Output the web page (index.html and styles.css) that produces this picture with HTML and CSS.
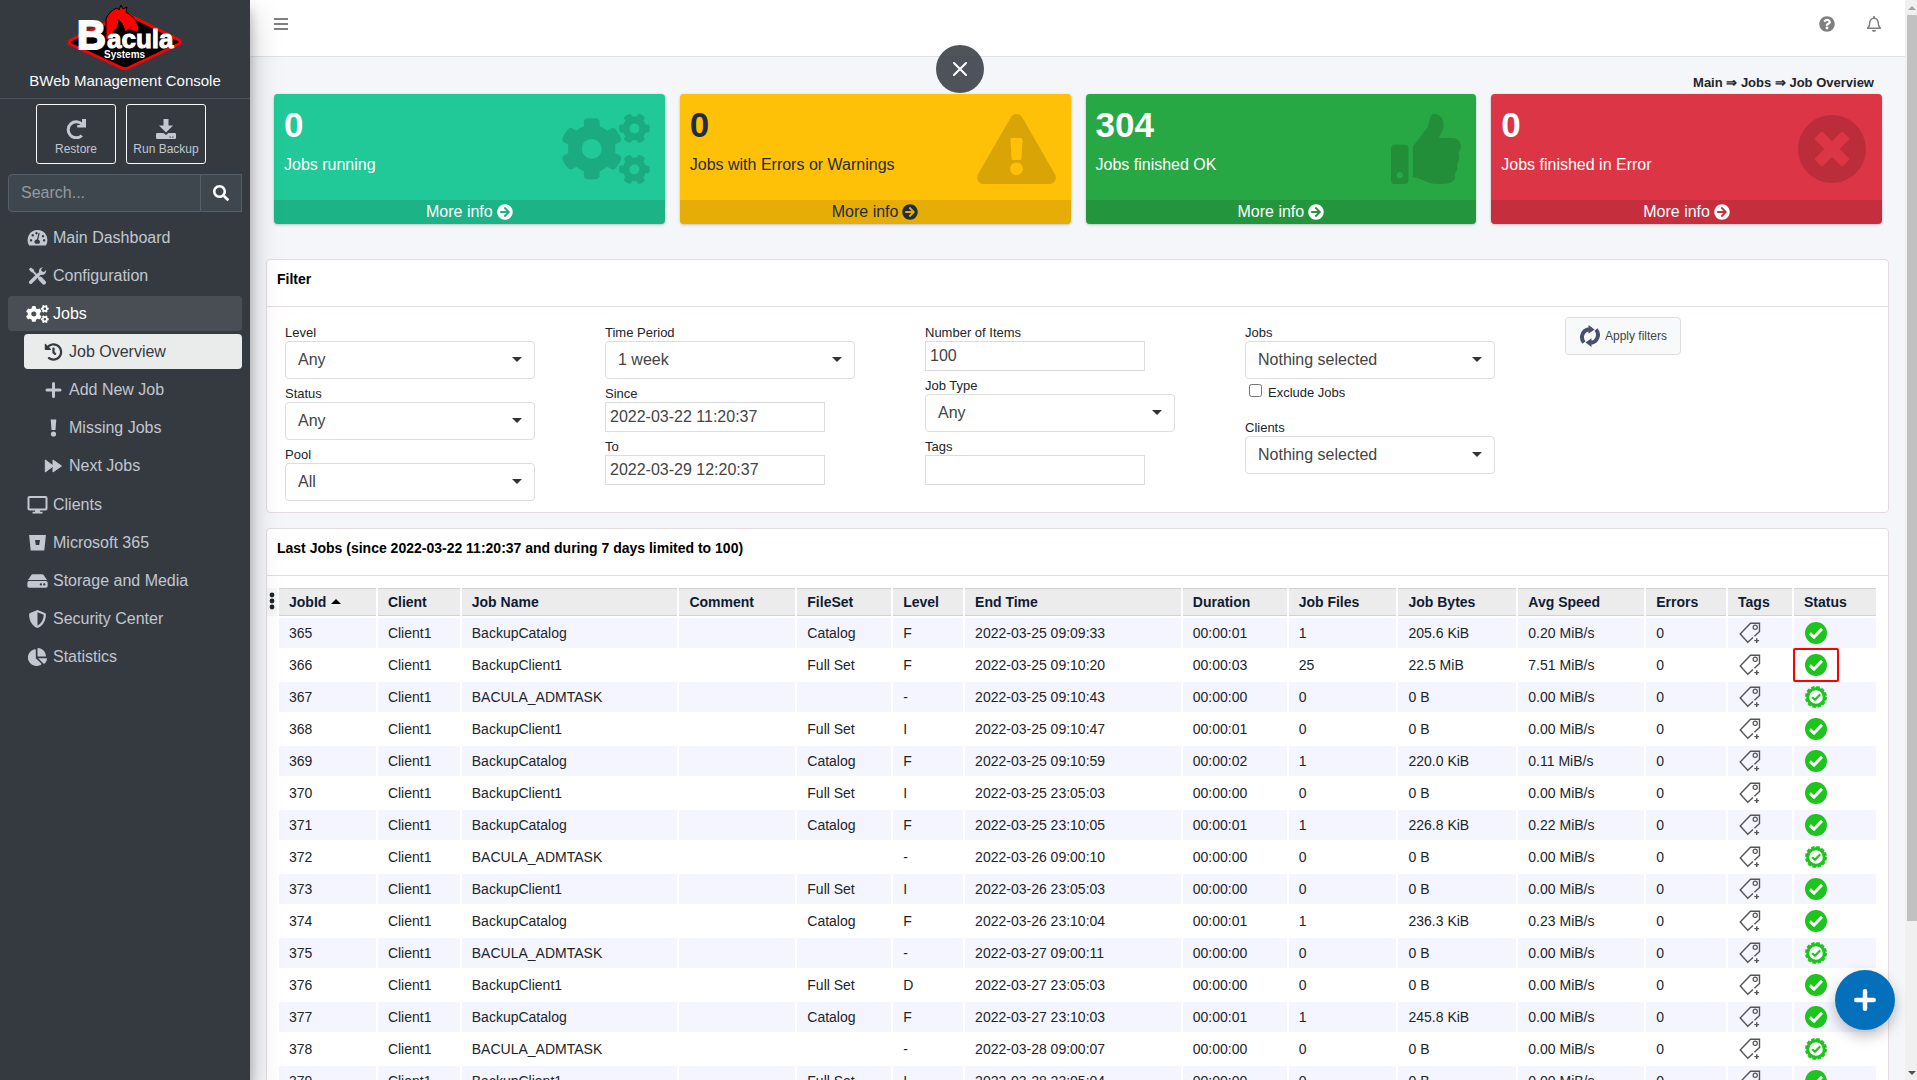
FILE: index.html
```html
<!DOCTYPE html>
<html lang="en">
<head>
<meta charset="utf-8">
<meta name="viewport" content="width=device-width, initial-scale=1">
<title>BWeb Management Console - Job Overview</title>
<link rel="stylesheet" href="styles.css">
</head>
<body>
<svg class="sprite" aria-hidden="true">
  <defs>
    <path id="small-cog" d="M512.1 191l-8.2 14.3c-3 5.3-9.4 7.5-15.1 5.4-11.8-4.4-22.6-10.7-32.1-18.6-4.6-3.8-5.8-10.5-2.8-15.7l8.2-14.3c-6.9-8-12.3-17.3-15.9-27.4h-16.5c-6 0-11.2-4.3-12.2-10.3-2-12-2.1-24.6 0-37.1 1-6 6.2-10.4 12.2-10.4h16.5c3.6-10.1 9-19.4 15.9-27.4l-8.2-14.3c-3-5.2-1.9-11.9 2.8-15.7 9.5-7.9 20.4-14.2 32.1-18.6 5.7-2.1 12.1.1 15.1 5.4l8.2 14.3c10.5-1.9 21.2-1.9 31.7 0L552 6.3c3-5.3 9.4-7.5 15.1-5.4 11.8 4.4 22.6 10.7 32.1 18.6 4.6 3.8 5.8 10.5 2.8 15.7l-8.2 14.3c6.9 8 12.3 17.3 15.9 27.4h16.5c6 0 11.2 4.3 12.2 10.3 2 12 2.1 24.6 0 37.1-1 6-6.2 10.4-12.2 10.4h-16.5c-3.6 10.1-9 19.4-15.9 27.4l8.2 14.3c3 5.2 1.9 11.9-2.8 15.7-9.5 7.9-20.4 14.2-32.1 18.6-5.7 2.1-12.1-.1-15.1-5.4l-8.2-14.3c-10.4 1.9-21.2 1.9-31.7 0zm-10.5-58.8c38.5 29.6 82.4-14.3 52.8-52.8-38.5-29.7-82.4 14.3-52.8 52.8z"/>
  </defs>
  <symbol id="i-cogs" viewBox="0 0 640 512">
    <use href="#small-cog"/>
    <use href="#small-cog" transform="translate(0 299)"/>
    <path d="M386.3 286.1l33.7 16.8c10.1 5.8 14.5 18.1 10.5 29.1-8.9 24.2-26.4 46.4-42.6 65.8-7.4 8.9-20.2 11.1-30.3 5.3l-29.1-16.8c-16 13.7-34.6 24.6-54.9 31.7v33.6c0 11.6-8.3 21.6-19.7 23.6-24.6 4.2-50.4 4.4-75.9 0-11.5-2-20-11.9-20-23.6V418c-20.3-7.2-38.9-18-54.9-31.7L74 403c-10 5.8-22.9 3.6-30.3-5.3-16.2-19.4-33.3-41.6-42.2-65.7-4-10.9.4-23.2 10.5-29.1l33.3-16.8c-3.9-20.9-3.9-42.4 0-63.4L12 205.8c-10.1-5.8-14.6-18.1-10.5-29 8.9-24.2 26-46.4 42.2-65.8 7.4-8.9 20.2-11.1 30.3-5.3l29.1 16.8c16-13.7 34.6-24.6 54.9-31.7V57.1c0-11.5 8.2-21.5 19.6-23.5 24.6-4.2 50.5-4.4 76-.1 11.5 2 20 11.9 20 23.6v33.6c20.3 7.2 38.9 18 54.9 31.7l29.1-16.8c10-5.8 22.9-3.6 30.3 5.3 16.2 19.4 33.2 41.6 42.1 65.8 4 10.9.1 23.2-10 29.1l-33.7 16.8c3.9 21 3.9 42.5 0 63.5zm-117.6 21.1c59.2-77-28.7-164.9-105.7-105.7-59.2 77 28.7 164.9 105.7 105.7z"/>
  </symbol>
  <symbol id="i-warning" viewBox="0 0 576 512"><path d="M569.517 440.013C587.975 472.007 564.806 512 527.94 512H48.054c-36.937 0-59.999-40.055-41.577-71.987L246.423 23.985c18.467-32.009 64.72-31.951 83.154 0l239.94 416.028zM288 354c-25.405 0-46 20.595-46 46s20.595 46 46 46 46-20.595 46-46-20.595-46-46-46zm-43.673-165.346l7.418 136c.347 6.364 5.609 11.346 11.982 11.346h48.546c6.373 0 11.635-4.982 11.982-11.346l7.418-136c.375-6.874-5.098-12.654-11.982-12.654h-63.383c-6.884 0-12.356 5.78-11.981 12.654z"/></symbol>
  <symbol id="i-thumb" viewBox="0 0 512 512"><path d="M104 224H24c-13.255 0-24 10.745-24 24v240c0 13.255 10.745 24 24 24h80c13.255 0 24-10.745 24-24V248c0-13.255-10.745-24-24-24zM64 472c-13.255 0-24-10.745-24-24s10.745-24 24-24 24 10.745 24 24-10.745 24-24 24zM384 81.452c0 42.416-25.97 66.208-33.277 94.548h101.723c33.397 0 59.397 27.746 59.553 58.098.084 17.938-7.546 37.249-19.439 49.197l-.11.11c9.836 23.337 8.237 56.037-9.308 79.469 8.681 25.895-.069 57.704-16.382 74.757 4.298 17.598 2.244 32.575-6.148 44.632C440.202 511.587 389.616 512 346.839 512l-2.845-.001c-48.287-.017-87.806-17.598-119.56-31.725-15.957-7.099-36.821-15.887-52.651-16.178-6.54-.12-11.783-5.457-11.783-11.998v-213.77c0-3.2 1.282-6.271 3.558-8.521 39.614-39.144 56.648-80.587 89.117-113.111 14.804-14.832 20.188-37.236 25.393-58.902C282.515 39.293 291.817 0 312 0c24 0 72 8 72 81.452z"/></symbol>
  <symbol id="i-times" viewBox="0 0 512 512"><path d="M256 8C119 8 8 119 8 256s111 248 248 248 248-111 248-248S393 8 256 8zm121.6 313.1c4.7 4.7 4.7 12.3 0 17L338 377.6c-4.7 4.7-12.3 4.7-17 0L256 312l-65.1 65.6c-4.7 4.7-12.3 4.7-17 0L134.4 338c-4.7-4.7-4.7-12.3 0-17l65.6-65-65.6-65.1c-4.7-4.7-4.7-12.3 0-17l39.6-39.6c4.7-4.7 12.3-4.7 17 0l65 65.7 65.1-65.6c4.7-4.7 12.3-4.7 17 0l39.6 39.6c4.7 4.7 4.7 12.3 0 17L312 256l65.6 65.1z"/></symbol>
  <symbol id="i-arrow" viewBox="0 0 512 512"><path d="M256 8c137 0 248 111 248 248S393 504 256 504 8 393 8 256 119 8 256 8zm-28.9 143.6l75.5 72.4H120c-13.3 0-24 10.7-24 24v16c0 13.3 10.7 24 24 24h182.6l-75.5 72.4c-9.7 9.3-9.9 24.8-.4 34.3l11 10.9c9.4 9.4 24.6 9.4 33.9 0L404.3 273c9.4-9.4 9.4-24.6 0-33.9L271.6 106.3c-9.4-9.4-24.6-9.4-33.9 0l-11 10.9c-9.5 9.6-9.3 25.1.4 34.4z"/></symbol>
  <symbol id="i-tag" viewBox="0 0 22 22"><path fill="none" stroke="#555" stroke-width="1.400" d="M15.500 14.300L20.500 9.500V1.200H11.500L1.200 12L8.800 20.300L14 15.600"/><circle cx="16.200" cy="5.200" r="2.100" fill="none" stroke="#555" stroke-width="1.200"/><path fill="none" stroke="#555" stroke-width="1.400" d="M17.700 16.200V21M15.300 18.600H20.100"/></symbol>
  <symbol id="i-ok" viewBox="0 0 22 22"><circle cx="11" cy="11" r="11" fill="#1ec41e"/><path fill="none" stroke="#fff" stroke-width="3" d="M4.800 11.300L9 15.200L17 6.800"/></symbol>
  <symbol id="i-admin" viewBox="0 0 22 22"><circle cx="11" cy="11" r="9.700" fill="#fff" stroke="#1ec41e" stroke-width="2.600" stroke-dasharray="3.400 1.679"/><circle cx="11" cy="11" r="8.300" fill="#fff" stroke="#1ec41e" stroke-width="3"/><path fill="none" stroke="#1ec41e" stroke-width="2" d="M7 11.200L10 13.800L15.200 8.200"/></symbol>
</svg>

<div class="app">
  <aside class="sidebar">
    <a class="brand" href="#">
      <svg class="brand-logo" viewBox="0 0 116 66" role="img" aria-label="Bacula Systems">
        <path fill="#000" stroke="#f00" stroke-width="3" stroke-linejoin="round" d="M3 35.500Q1.500 37 3 39L55 63Q58 64.500 61 63L112 39Q114.500 37 112 35L64 11L50 13Z"/>
        <path fill="#f00" stroke="#000" stroke-width="1" d="M39 14Q42 6 50 3L52 5L54 0L56 4L60 2L59 7L62 9Q68 13 70 18Q73 22 71 27L66 26L62 24L58 27Q56 18 51 14Q53 20 48 25Q44 29 43 36L39 34Z"/>
        <text class="logo-b" x="10" y="44">B</text>
        <text class="logo-acula" x="40" y="43">acula</text>
        <text class="logo-systems" x="37" y="53">Systems</text>
      </svg>
      <span class="brand-text">BWeb Management Console</span>
    </a>
    <div class="quick">
      <button type="button" class="quick-btn">
        <svg width="20" height="20" viewBox="0 0 20 20"><path fill="none" stroke="currentColor" stroke-width="3" d="M16.200 5.500A8 8 0 1 0 15.800 16.500"/><path fill="currentColor" d="M20 0V8.600H11.200V6H16V0Z"/></svg>
        <span>Restore</span>
      </button>
      <button type="button" class="quick-btn">
        <svg width="20" height="20" viewBox="0 0 20 20"><path fill="currentColor" fill-rule="evenodd" d="M7.500 0H12.500V6.500H17L10 13.500L3 6.500H7.500ZM1.200 14H7.500L10 16L12.500 14H18.800Q20 14 20 15.200V18.800Q20 20 18.800 20H1.200Q0 20 0 18.800V15.200Q0 14 1.200 14ZM13.500 17.600V18.800H14.700V17.600ZM16.200 17.600V18.800H17.400V17.600Z"/></svg>
        <span>Run Backup</span>
      </button>
    </div>
    <form class="search">
      <input type="text" placeholder="Search..." aria-label="Search">
      <button type="button" aria-label="Search"><svg width="16" height="16" viewBox="0 0 512 512"><path fill="currentColor" d="M505 442.700L405.300 343c-4.500-4.500-10.600-7-17-7H372c27.600-35.300 44-79.700 44-128C416 93.100 322.900 0 208 0S0 93.100 0 208s93.100 208 208 208c48.300 0 92.700-16.400 128-44v16.300c0 6.400 2.500 12.500 7 17l99.700 99.700c9.400 9.400 24.600 9.400 33.900 0l28.300-28.300c9.400-9.400 9.400-24.600.1-34zM208 336c-70.700 0-128-57.200-128-128 0-70.700 57.200-128 128-128 70.700 0 128 57.200 128 128 0 70.700-57.200 128-128 128z"/></svg></button>
    </form>
    <nav class="menu">
      <a href="#"><svg width="20" height="18" viewBox="0 0 20 18"><path fill="currentColor" fill-rule="evenodd" d="M10 1A10 10 0 0 0 1.400 16Q1.700 16.500 2.300 16.500H17.700Q18.300 16.500 18.600 16A10 10 0 0 0 10 1ZM3.500 10.100a1.200 1.200 0 1 0 .01 0ZM5.200 5.100a1.200 1.200 0 1 0 .01 0ZM9 3a1.200 1.200 0 1 0 .01 0ZM16.600 10.100a1.200 1.200 0 1 0 .01 0ZM15.500 6a1.200 1.200 0 1 0 .01 0ZM12.200 4L10.700 10.700A2.300 2.300 0 0 1 11.600 14.700H8A2.300 2.300 0 0 1 9.500 10.500L11 4Z"/></svg>Main Dashboard</a>
      <a href="#"><svg width="20" height="18" viewBox="0 0 20 18"><g fill="none" stroke="currentColor" stroke-linecap="round"><path stroke-width="4.200" d="M12.800 11.800L16.400 15.400"/><path stroke-width="1.800" d="M4 3L12 11"/><path stroke-width="3.600" d="M3.200 15.200L8.800 9.800"/><path stroke-width="3" d="M9.500 9L13.500 5.500"/></g><path fill="currentColor" d="M1.300 2.200L3.200.400L6.500 2.800V5.200H4ZM11.500 5Q11 1 15.400.2L13.500 2.500L14.200 4.500L16.500 5L18.700 3Q18.900 8 13.500 8Z"/></svg>Configuration</a>
      <a href="#" class="open"><svg width="22" height="18" fill="currentColor"><use href="#i-cogs"/></svg>Jobs</a>
      <div class="submenu">
        <a href="#" class="current"><svg width="18" height="18" viewBox="0 0 512 512"><path fill="currentColor" d="M504 255.531c.253 136.640-111.180 248.372-247.820 248.468-59.015.042-113.223-20.530-155.822-54.911-11.077-8.940-11.905-25.541-1.839-35.607l11.267-11.267c8.609-8.609 22.353-9.551 31.891-1.984C173.062 425.135 212.781 440 256 440c101.705 0 184-82.311 184-184 0-101.705-82.311-184-184-184-48.814 0-93.149 18.969-126.068 49.932l50.754 50.754c10.080 10.080 2.941 27.314-11.313 27.314H24c-8.837 0-16-7.163-16-16V38.627c0-14.254 17.234-21.393 27.314-11.314l49.372 49.372C129.209 34.136 189.552 8 256 8c136.810 0 247.747 110.780 248 247.531zm-180.912 78.784l9.823-12.630c8.138-10.463 6.253-25.542-4.210-33.679L288 256.349V152c0-13.255-10.745-24-24-24h-16c-13.255 0-24 10.745-24 24v135.651l65.409 50.874c10.463 8.137 25.541 6.253 33.679-4.210z"/></svg>Job Overview</a>
        <a href="#"><svg width="18" height="18" viewBox="0 0 18 18"><path fill="none" stroke="currentColor" stroke-width="3" stroke-linecap="round" d="M9 2.500V15.500M2.500 9H15.500"/></svg>Add New Job</a>
        <a href="#"><svg width="18" height="18" viewBox="0 0 18 18"><path fill="currentColor" d="M6.200 .5H11.800L11 11H7Z"/><circle cx="9" cy="15" r="2.600" fill="currentColor"/></svg>Missing Jobs</a>
        <a href="#"><svg width="18" height="18" viewBox="0 0 18 18"><path fill="currentColor" stroke="currentColor" stroke-linejoin="round" d="M.8 3V15L8.500 9.200V15L17 9L8.500 3V8.800Z"/></svg>Next Jobs</a>
      </div>
      <a href="#"><svg width="20" height="18" viewBox="0 0 20 18"><rect x="1" y="1" width="18" height="12.500" rx="1" fill="none" stroke="currentColor" stroke-width="2"/><path fill="currentColor" d="M8 13H12L12.600 15.800H15V17.500H5V15.800H7.400Z"/></svg>Clients</a>
      <a href="#"><svg width="20" height="18" viewBox="0 0 20 18"><path fill="currentColor" fill-rule="evenodd" d="M1.600 1H18.400L16.800 16.500H3.200ZM7.500 6L8.300 11H11.700L12.500 6Z"/></svg>Microsoft 365</a>
      <a href="#"><svg width="20" height="18" viewBox="0 0 576 512"><path fill="currentColor" d="M576 304v96c0 26.510-21.490 48-48 48H48c-26.510 0-48-21.490-48-48v-96c0-26.510 21.490-48 48-48h480c26.510 0 48 21.490 48 48zm-48-80a79.557 79.557 0 0 1 30.777 6.165L462.250 85.374A48.003 48.003 0 0 0 422.311 64H153.689a48 48 0 0 0-39.938 21.374L17.223 230.165A79.557 79.557 0 0 1 48 224h480zm-48 96c-17.673 0-32 14.327-32 32s14.327 32 32 32 32-14.327 32-32-14.327-32-32-32zm-96 0c-17.673 0-32 14.327-32 32s14.327 32 32 32 32-14.327 32-32-14.327-32-32-32z"/></svg>Storage and Media</a>
      <a href="#"><svg width="20" height="18" viewBox="0 0 512 512"><path fill="currentColor" d="M466.500 83.700l-192-80a48.150 48.150 0 0 0-36.900 0l-192 80C27.700 91.100 16 108.600 16 128c0 198.500 114.500 335.700 221.500 380.300 11.800 4.900 25.100 4.900 36.900 0C360.100 472.600 496 349.300 496 128c0-19.400-11.700-36.900-29.500-44.300zM256.100 446.300l-.1-381 175.900 73.300c-3.300 151.400-82.100 261.100-175.800 307.700z"/></svg>Security Center</a>
      <a href="#"><svg width="20" height="18" viewBox="0 0 544 512"><path fill="currentColor" d="M527.790 288H290.500l158.030 158.030c6.040 6.040 15.980 6.530 22.190.680 38.700-36.460 65.320-85.610 73.130-140.860 1.340-9.460-6.510-17.850-16.060-17.850zm-15.830-64.800C503.720 103.740 408.260 8.280 288.800.040 279.680-.590 272 7.100 272 16.240V240h223.770c9.140 0 16.820-7.680 16.190-16.800zM224 288V50.710c0-9.550-8.390-17.400-17.840-16.060C86.990 51.490-4.100 155.600.140 280.370 4.500 408.510 114.830 513.590 243.030 511.980c50.400-.630 96.970-16.870 135.260-44.030 7.900-5.600 8.420-17.230 1.570-24.080L224 288z"/></svg>Statistics</a>
    </nav>
  </aside>

  <div class="page">
    <header class="topbar">
      <button type="button" class="icon-btn" aria-label="Toggle menu"><svg width="14" height="14" viewBox="0 0 14 14"><path stroke="currentColor" stroke-width="2" d="M0 2H14M0 7H14M0 12H14"/></svg></button>
      <div class="topbar-right">
        <button type="button" class="icon-btn" aria-label="Help"><svg width="16" height="16" viewBox="0 0 512 512"><path fill="currentColor" d="M504 256c0 136.997-111.043 248-248 248S8 392.997 8 256C8 119.083 119.043 8 256 8s248 111.083 248 248zM262.655 90c-54.497 0-89.255 22.957-116.549 63.758-3.536 5.286-2.353 12.415 2.715 16.258l34.699 26.310c5.205 3.947 12.621 3.008 16.665-2.122 17.864-22.658 30.113-35.797 57.303-35.797 20.429 0 45.698 13.148 45.698 32.958 0 14.976-12.363 22.667-32.534 33.976C247.128 238.528 216 254.941 216 296v4c0 6.627 5.373 12 12 12h56c6.627 0 12-5.373 12-12v-1.333c0-28.462 83.186-29.647 83.186-106.667 0-58.002-60.165-102-116.531-102zM256 338c-25.365 0-46 20.635-46 46 0 25.364 20.635 46 46 46s46-20.636 46-46c0-25.365-20.635-46-46-46z"/></svg></button>
        <button type="button" class="icon-btn" aria-label="Notifications"><svg width="14" height="16" viewBox="0 0 448 512"><path fill="currentColor" d="M439.390 362.290c-19.320-20.760-55.470-51.990-55.470-154.290 0-77.700-54.480-139.900-127.940-155.160V32c0-17.670-14.320-32-31.980-32s-31.980 14.330-31.980 32v20.840C118.560 68.100 64.080 130.300 64.080 208c0 102.300-36.150 133.530-55.470 154.290-6 6.450-8.660 14.160-8.610 21.710.11 16.400 12.980 32 32.100 32h383.800c19.120 0 32-15.600 32.100-32 .05-7.550-2.610-15.270-8.610-21.710zM67.530 368c21.220-27.970 44.420-74.330 44.530-159.420 0-.2-.06-.38-.06-.58 0-61.860 50.140-112 112-112s112 50.140 112 112c0 .2-.06.38-.06.58.11 85.100 23.310 131.460 44.530 159.420H67.530zM224 512c35.320 0 63.970-28.650 63.970-64H160.030c0 35.350 28.650 64 63.970 64z"/></svg></button>
      </div>
    </header>

    <main class="content">
      <div class="crumbs">Main ⇒ Jobs ⇒ Job Overview</div>

      <section class="stats">
        <div class="stat teal">
          <div class="stat-body">
            <div><div class="stat-num">0</div><div class="stat-label">Jobs running</div></div>
            <svg width="88" height="70"><use href="#i-cogs"/></svg>
          </div>
          <a class="stat-more" href="#">More info <svg width="16" height="16"><use href="#i-arrow"/></svg></a>
        </div>
        <div class="stat yellow">
          <div class="stat-body">
            <div><div class="stat-num">0</div><div class="stat-label">Jobs with Errors or Warnings</div></div>
            <svg width="79" height="70"><use href="#i-warning"/></svg>
          </div>
          <a class="stat-more" href="#">More info <svg width="16" height="16"><use href="#i-arrow"/></svg></a>
        </div>
        <div class="stat green">
          <div class="stat-body">
            <div><div class="stat-num">304</div><div class="stat-label">Jobs finished OK</div></div>
            <svg width="70" height="70"><use href="#i-thumb"/></svg>
          </div>
          <a class="stat-more" href="#">More info <svg width="16" height="16"><use href="#i-arrow"/></svg></a>
        </div>
        <div class="stat red">
          <div class="stat-body">
            <div><div class="stat-num">0</div><div class="stat-label">Jobs finished in Error</div></div>
            <svg width="70" height="70"><use href="#i-times"/></svg>
          </div>
          <a class="stat-more" href="#">More info <svg width="16" height="16"><use href="#i-arrow"/></svg></a>
        </div>
      </section>

      <section class="card">
        <h2 class="card-title">Filter</h2>
        <form class="filters">
          <div class="col">
            <div class="field"><label for="level">Level</label><div class="pick"><select id="level"><option>Any</option></select></div></div>
            <div class="field"><label for="status">Status</label><div class="pick"><select id="status"><option>Any</option></select></div></div>
            <div class="field"><label for="pool">Pool</label><div class="pick"><select id="pool"><option>All</option></select></div></div>
          </div>
          <div class="col">
            <div class="field"><label for="period">Time Period</label><div class="pick"><select id="period"><option>1 week</option></select></div></div>
            <div class="field"><label for="since">Since</label><input type="text" id="since" value="2022-03-22 11:20:37"></div>
            <div class="field"><label for="to">To</label><input type="text" id="to" value="2022-03-29 12:20:37"></div>
          </div>
          <div class="col">
            <div class="field"><label for="items">Number of Items</label><input type="text" id="items" value="100"></div>
            <div class="field"><label for="type">Job Type</label><div class="pick"><select id="type"><option>Any</option></select></div></div>
            <div class="field"><label for="tags">Tags</label><input type="text" id="tags"></div>
          </div>
          <div class="col">
            <div class="field"><label for="jobs">Jobs</label><div class="pick"><select id="jobs"><option>Nothing selected</option></select></div></div>
            <div class="check"><input type="checkbox" id="exclude"><label for="exclude">Exclude Jobs</label></div>
            <div class="field"><label for="clients">Clients</label><div class="pick"><select id="clients"><option>Nothing selected</option></select></div></div>
          </div>
          <div class="col col-apply">
            <button type="button" class="apply"><svg width="22" height="22" viewBox="0 0 22 22"><path fill="none" stroke="#47506a" stroke-width="4" d="M5 17.500A8 8 0 0 1 10 4.300M17 4.500A8 8 0 0 1 12 17.700"/><path fill="#47506a" d="M9.500 0L15.500 4.500L9.500 8.800ZM12.500 13.200L6.500 17.500L12.500 22Z"/></svg>Apply filters</button>
          </div>
        </form>
      </section>

      <section class="card">
        <h2 class="card-title">Last Jobs (since 2022-03-22 11:20:37 and during 7 days limited to 100)</h2>
        <div class="jobs">
          <button type="button" class="handle" aria-label="Choose columns"><svg width="6" height="20" viewBox="0 0 6 20" fill="#212529"><circle cx="3" cy="3" r="2.400"/><circle cx="3" cy="9" r="2.400"/><circle cx="3" cy="15" r="2.400"/></svg></button>
          <table>
            <colgroup><col class="w97"><col class="w82"><col class="w216"><col class="w116"><col class="w94"><col class="w70"><col class="w216"><col class="w104"><col class="w108"><col class="w118"><col class="w126"><col class="w80"><col class="w64"><col class="w82"></colgroup>
            <thead><tr><th>JobId<span class="sort"></span></th><th>Client</th><th>Job Name</th><th>Comment</th><th>FileSet</th><th>Level</th><th>End Time</th><th>Duration</th><th>Job Files</th><th>Job Bytes</th><th>Avg Speed</th><th>Errors</th><th>Tags</th><th>Status</th></tr></thead>
            <tbody>
              <tr><td>365</td><td>Client1</td><td>BackupCatalog</td><td></td><td>Catalog</td><td>F</td><td>2022-03-25 09:09:33</td><td>00:00:01</td><td>1</td><td>205.6 KiB</td><td>0.20 MiB/s</td><td>0</td><td><svg><use href="#i-tag"/></svg></td><td><svg><use href="#i-ok"/></svg></td></tr>
              <tr><td>366</td><td>Client1</td><td>BackupClient1</td><td></td><td>Full Set</td><td>F</td><td>2022-03-25 09:10:20</td><td>00:00:03</td><td>25</td><td>22.5 MiB</td><td>7.51 MiB/s</td><td>0</td><td><svg><use href="#i-tag"/></svg></td><td class="marked"><svg><use href="#i-ok"/></svg></td></tr>
              <tr><td>367</td><td>Client1</td><td>BACULA_ADMTASK</td><td></td><td></td><td>-</td><td>2022-03-25 09:10:43</td><td>00:00:00</td><td>0</td><td>0 B</td><td>0.00 MiB/s</td><td>0</td><td><svg><use href="#i-tag"/></svg></td><td><svg><use href="#i-admin"/></svg></td></tr>
              <tr><td>368</td><td>Client1</td><td>BackupClient1</td><td></td><td>Full Set</td><td>I</td><td>2022-03-25 09:10:47</td><td>00:00:01</td><td>0</td><td>0 B</td><td>0.00 MiB/s</td><td>0</td><td><svg><use href="#i-tag"/></svg></td><td><svg><use href="#i-ok"/></svg></td></tr>
              <tr><td>369</td><td>Client1</td><td>BackupCatalog</td><td></td><td>Catalog</td><td>F</td><td>2022-03-25 09:10:59</td><td>00:00:02</td><td>1</td><td>220.0 KiB</td><td>0.11 MiB/s</td><td>0</td><td><svg><use href="#i-tag"/></svg></td><td><svg><use href="#i-ok"/></svg></td></tr>
              <tr><td>370</td><td>Client1</td><td>BackupClient1</td><td></td><td>Full Set</td><td>I</td><td>2022-03-25 23:05:03</td><td>00:00:00</td><td>0</td><td>0 B</td><td>0.00 MiB/s</td><td>0</td><td><svg><use href="#i-tag"/></svg></td><td><svg><use href="#i-ok"/></svg></td></tr>
              <tr><td>371</td><td>Client1</td><td>BackupCatalog</td><td></td><td>Catalog</td><td>F</td><td>2022-03-25 23:10:05</td><td>00:00:01</td><td>1</td><td>226.8 KiB</td><td>0.22 MiB/s</td><td>0</td><td><svg><use href="#i-tag"/></svg></td><td><svg><use href="#i-ok"/></svg></td></tr>
              <tr><td>372</td><td>Client1</td><td>BACULA_ADMTASK</td><td></td><td></td><td>-</td><td>2022-03-26 09:00:10</td><td>00:00:00</td><td>0</td><td>0 B</td><td>0.00 MiB/s</td><td>0</td><td><svg><use href="#i-tag"/></svg></td><td><svg><use href="#i-admin"/></svg></td></tr>
              <tr><td>373</td><td>Client1</td><td>BackupClient1</td><td></td><td>Full Set</td><td>I</td><td>2022-03-26 23:05:03</td><td>00:00:00</td><td>0</td><td>0 B</td><td>0.00 MiB/s</td><td>0</td><td><svg><use href="#i-tag"/></svg></td><td><svg><use href="#i-ok"/></svg></td></tr>
              <tr><td>374</td><td>Client1</td><td>BackupCatalog</td><td></td><td>Catalog</td><td>F</td><td>2022-03-26 23:10:04</td><td>00:00:01</td><td>1</td><td>236.3 KiB</td><td>0.23 MiB/s</td><td>0</td><td><svg><use href="#i-tag"/></svg></td><td><svg><use href="#i-ok"/></svg></td></tr>
              <tr><td>375</td><td>Client1</td><td>BACULA_ADMTASK</td><td></td><td></td><td>-</td><td>2022-03-27 09:00:11</td><td>00:00:00</td><td>0</td><td>0 B</td><td>0.00 MiB/s</td><td>0</td><td><svg><use href="#i-tag"/></svg></td><td><svg><use href="#i-admin"/></svg></td></tr>
              <tr><td>376</td><td>Client1</td><td>BackupClient1</td><td></td><td>Full Set</td><td>D</td><td>2022-03-27 23:05:03</td><td>00:00:00</td><td>0</td><td>0 B</td><td>0.00 MiB/s</td><td>0</td><td><svg><use href="#i-tag"/></svg></td><td><svg><use href="#i-ok"/></svg></td></tr>
              <tr><td>377</td><td>Client1</td><td>BackupCatalog</td><td></td><td>Catalog</td><td>F</td><td>2022-03-27 23:10:03</td><td>00:00:01</td><td>1</td><td>245.8 KiB</td><td>0.00 MiB/s</td><td>0</td><td><svg><use href="#i-tag"/></svg></td><td><svg><use href="#i-ok"/></svg></td></tr>
              <tr><td>378</td><td>Client1</td><td>BACULA_ADMTASK</td><td></td><td></td><td>-</td><td>2022-03-28 09:00:07</td><td>00:00:00</td><td>0</td><td>0 B</td><td>0.00 MiB/s</td><td>0</td><td><svg><use href="#i-tag"/></svg></td><td><svg><use href="#i-admin"/></svg></td></tr>
              <tr><td>379</td><td>Client1</td><td>BackupClient1</td><td></td><td>Full Set</td><td>I</td><td>2022-03-28 23:05:04</td><td>00:00:00</td><td>0</td><td>0 B</td><td>0.00 MiB/s</td><td>0</td><td><svg><use href="#i-tag"/></svg></td><td><svg><use href="#i-ok"/></svg></td></tr>
            </tbody>
          </table>
        </div>
      </section>
    </main>
  </div>

  <div class="scrollbar" aria-hidden="true">
    <span class="scroll-up"></span>
    <span class="scroll-thumb"></span>
    <span class="scroll-rest"></span>
    <span class="scroll-down"></span>
  </div>
</div>

<button type="button" class="close" aria-label="Close"><svg width="14" height="14" viewBox="0 0 14 14"><path stroke="#fff" stroke-width="2" d="M0 0L14 14M14 0L0 14"/></svg></button>
<button type="button" class="fab" aria-label="Add"><svg width="22" height="22" viewBox="0 0 22 22"><path stroke="#fff" stroke-width="4.500" stroke-linecap="round" d="M11 2.300V19.700M2.300 11H19.700"/></svg></button>
</body>
</html>
```
FILE: styles.css
```css
*, *::before, *::after { box-sizing: border-box; }

body {
  margin: 0;
  overflow: hidden;
  font: 16px/24px "Liberation Sans", Arial, sans-serif;
  color: #212529;
  background: #f4f6f9;
}

a { color: inherit; text-decoration: none; }
button, input, select { font: inherit; color: inherit; margin: 0; }
button { cursor: pointer; }
svg { flex: none; display: block; }
.sprite { position: absolute; width: 0; height: 0; }

.app { display: flex; height: 100vh; }

/* Sidebar */
.sidebar {
  flex: none;
  width: 250px;
  background: #343a40;
  color: #c2c7d0;
  z-index: 1;
  box-shadow: 0 14px 28px rgba(0, 0, 0, .25), 0 10px 10px rgba(0, 0, 0, .22);
}
.brand {
  display: flex;
  flex-direction: column;
  align-items: center;
  height: 99px;
  padding-top: 5px;
  border-bottom: 1px solid #4b545c;
}
.brand-logo { width: 116px; height: 66px; }
.brand-text { font-size: 15px; line-height: 20px; color: #f8f9fa; }
.logo-b, .logo-acula, .logo-systems {
  font-family: "Liberation Sans", Arial, sans-serif;
  font-weight: bold;
  fill: #fff;
}
.logo-b { font-size: 40px; stroke: #fff; stroke-width: 2px; }
.logo-acula { font-size: 26px; stroke: #fff; stroke-width: 1px; }
.logo-systems { font-size: 10px; }

.quick { display: flex; gap: 10px; padding: 5px 36px 10px; }
.quick-btn {
  display: flex;
  flex-direction: column;
  align-items: center;
  gap: 2px;
  width: 80px;
  height: 60px;
  padding: 14px 0 0;
  background: none;
  border: 1px solid #f8f9fa;
  border-radius: 3px;
  font-size: 12px;
  line-height: 16px;
  white-space: nowrap;
}

.search { display: flex; height: 38px; margin: 0 8px; }
.search input {
  flex: 1;
  min-width: 0;
  padding: 0 12px;
  background: #3f474e;
  border: 1px solid #56606a;
  border-radius: 4px 0 0 4px;
  color: #fff;
}
.search input::placeholder { color: #939ba2; opacity: 1; }
.search button {
  display: flex;
  align-items: center;
  justify-content: center;
  width: 41px;
  padding: 0;
  background: #3f474e;
  border: 1px solid #56606a;
  border-left: 0;
  color: #fff;
}

.menu { display: flex; flex-direction: column; gap: 3px; padding: 8px 8px 0; }
.menu a {
  display: flex;
  align-items: center;
  gap: 4px;
  height: 35px;
  padding-left: 18px;
  border-radius: 4px;
}
.menu a svg { width: 23px; }
.menu a.open { background: rgba(255, 255, 255, .1); color: #fff; }
.menu a.current { background: #eaecec; color: #343a40; }
.submenu { display: flex; flex-direction: column; gap: 3px; padding: 0 0 1px 16px; }

/* Top bar */
.page { flex: 1; min-width: 0; overflow: hidden; }
.topbar {
  display: flex;
  justify-content: space-between;
  height: 57px;
  padding: 16px 24px 0;
  background: #fff;
  border-bottom: 1px solid #dee2e6;
}
.topbar-right { display: flex; gap: 32px; }
.icon-btn {
  display: flex;
  align-items: center;
  height: 16px;
  padding: 0;
  background: none;
  border: 0;
  color: #7f7f7f;
}

/* Content */
.content { padding: 16px 16px 0; }
.crumbs {
  padding: 0 15px 1px;
  text-align: right;
  font-size: 13px;
  line-height: 20px;
  font-weight: bold;
}

.stats {
  display: grid;
  grid-template-columns: repeat(4, 1fr);
  gap: 15px;
  padding: 0 7px 35px 8px;
}
.stat {
  overflow: hidden;
  border-radius: 4px;
  color: #fff;
  box-shadow: 0 0 1px rgba(0, 0, 0, .13), 0 1px 3px rgba(0, 0, 0, .2);
}
.stat.teal { background: #20c997; }
.stat.yellow { background: #ffc107; color: #1f2d3d; }
.stat.green { background: #28a745; }
.stat.red { background: #dc3545; }
.stat-body {
  display: flex;
  justify-content: space-between;
  height: 106px;
  padding: 10px 15px 0 10px;
}
.stat-body svg { margin-top: 10px; fill: rgba(0, 0, 0, .15); }
.stat-num { font-size: 35px; line-height: 42px; font-weight: bold; }
.stat-label { margin-top: 7px; }
.stat-more {
  display: flex;
  align-items: center;
  justify-content: center;
  gap: 4px;
  height: 24px;
  background: rgba(0, 0, 0, .1);
}
.stat-more svg { fill: currentColor; }

.card {
  margin-bottom: 15px;
  background: #fff;
  border: 1px solid #e5dbde;
  border-radius: 4px;
}
.card-title {
  height: 47px;
  margin: 0;
  padding: 9px 10px 0;
  border-bottom: 1px solid #e5dbde;
  font-size: 14px;
  line-height: 20px;
  color: #000;
}

/* Filter form */
.filters {
  display: grid;
  grid-template-columns: repeat(5, 1fr);
  padding: 15px 3px 7px 18px;
  font-size: 13px;
  line-height: 17px;
}
.field { margin-bottom: 4px; }
.field label { display: block; padding-top: 2px; }
.field input {
  display: block;
  width: 220px;
  height: 30px;
  padding: 0 4px;
  border: 1px solid #dcdcdc;
  background: #fff;
  font-size: 16px;
  color: #444;
}
.pick { position: relative; width: 250px; }
.pick::after {
  content: "";
  position: absolute;
  top: 16px;
  right: 13px;
  border: 5px solid transparent;
  border-top-color: #333;
  border-bottom: 0;
  pointer-events: none;
}
.pick select {
  display: block;
  width: 100%;
  height: 38px;
  padding: 0 28px 1px 12px;
  appearance: none;
  background: #fff;
  border: 1px solid #ddd;
  border-radius: 4px;
  font-size: 16px;
  color: #444;
}
.check { display: flex; gap: 6px; height: 34px; padding: 1px 0 0 4px; }
.check input { width: 13px; height: 13px; }
.col-apply { display: flex; align-items: flex-start; }
.apply {
  display: flex;
  align-items: center;
  gap: 4px;
  height: 38px;
  margin-top: -5px;
  padding: 0 13px;
  background: #f8f9fa;
  border: 1px solid #ddd;
  border-radius: 4px;
  font-size: 12px;
  color: #444;
}

/* Jobs table */
.jobs { display: flex; align-items: flex-start; padding: 10px 10px 10px 0; }
.handle {
  display: flex;
  align-items: center;
  justify-content: center;
  width: 10px;
  height: 28px;
  margin-top: 2px;
  padding: 0;
  background: #f4f6f9;
  border: 0;
}
table {
  flex: 1;
  table-layout: fixed;
  border-spacing: 2px;
  font-size: 14px;
  line-height: 20px;
}
th, td { height: 30px; padding: 0 10px; text-align: left; white-space: nowrap; }
th {
  height: 28px;
  background: #ececec;
  border: 1px solid #d2d2d2;
  border-width: 1px 0;
  color: #0f1b33;
}
tbody tr:nth-child(odd) td { background: #f5f5ff; }
td svg { width: 22px; height: 22px; }
td:nth-child(n+13) { position: relative; padding-left: 11px; }
.marked::after {
  content: "";
  position: absolute;
  inset: -2px auto -2px -1px;
  width: 46px;
  border: 2px solid #f00;
  border-radius: 2px;
}
.sort {
  display: inline-block;
  margin: 0 0 3px 5px;
  border: 5px solid transparent;
  border-bottom-color: #000;
  border-top: 0;
}
.w64 { width: 64px; }
.w70 { width: 70px; }
.w80 { width: 80px; }
.w82 { width: 82px; }
.w94 { width: 94px; }
.w97 { width: 97px; }
.w104 { width: 104px; }
.w108 { width: 108px; }
.w116 { width: 116px; }
.w118 { width: 118px; }
.w126 { width: 126px; }
.w216 { width: 216px; }

/* Page scroll bar */
.scrollbar {
  flex: none;
  display: flex;
  flex-direction: column;
  width: 12px;
  background: #f0f0f0;
}
.scroll-up, .scroll-down { height: 15px; padding: 6px 0 0 3px; }
.scroll-up::before, .scroll-down::before {
  content: "";
  display: block;
  width: 0;
  border: 4px solid transparent;
}
.scroll-up::before { border-bottom-color: #a3a3a3; border-top: 0; }
.scroll-down::before { border-top-color: #505050; border-bottom: 0; }
.scroll-thumb { flex: 906; margin-left: 2px; background: #c1c1c1; }
.scroll-rest { flex: 144; }

/* Floating buttons */
.close, .fab {
  position: fixed;
  display: flex;
  align-items: center;
  justify-content: center;
  padding: 0;
  border: 0;
  border-radius: 50%;
  z-index: 2;
}
.close {
  top: 45px;
  left: calc(50% - 23px);
  width: 48px;
  height: 48px;
  background: rgba(60, 64, 72, .9);
}
.fab {
  right: 22px;
  bottom: 50px;
  width: 60px;
  height: 60px;
  background: #0470bb;
  box-shadow: 0 6px 14px rgba(0, 0, 0, .25);
}
```
